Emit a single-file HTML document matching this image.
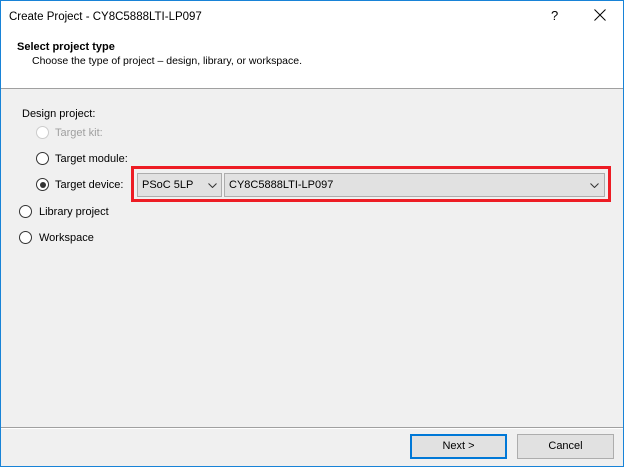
<!DOCTYPE html>
<html><head><meta charset="utf-8"><style>
*{margin:0;padding:0;box-sizing:border-box}
body{width:624px;height:467px;overflow:hidden;font-family:"Liberation Sans",sans-serif;font-size:11px;color:#000;position:relative;background:#f0f0f0}
.a{position:absolute;white-space:nowrap}
.win{position:absolute;left:0;top:0;width:624px;height:467px;border:1px solid #1883d7;background:#f0f0f0}
.head{position:absolute;left:1px;top:1px;width:622px;height:88px;background:#fff;border-bottom:1px solid #a0a0a0}
.r{position:absolute;width:13px;height:13px;border:1px solid #333;border-radius:50%;background:#fff}
.r.dis{border-color:#ccc}
.r.on::after{content:"";position:absolute;left:2.5px;top:2.5px;width:6px;height:6px;border-radius:50%;background:#333}
.cb{position:absolute;height:24px;border:1px solid #adadad;background:#e1e1e1;padding:5px 0 0 4px}
.btn{position:absolute;height:25px;border:1px solid #adadad;background:#e1e1e1;text-align:center;line-height:23px}
</style></head><body>
<div class="win"></div>
<div class="head"></div>
<div class="a" style="left:9px;top:11px;font-size:11.5px">Create Project - CY8C5888LTI-LP097</div>
<div class="a" style="left:551px;top:8px;font-size:13px">?</div>
<svg class="a" style="left:594px;top:9px" width="12" height="12"><path d="M0.5 0.5L11.5 11.5M11.5 0.5L0.5 11.5" stroke="#000" stroke-width="1"/></svg>
<div class="a" style="left:17px;top:41px;font-weight:bold;font-size:11px">Select project type</div>
<div class="a" style="left:32px;top:55px;font-size:10.5px">Choose the type of project – design, library, or workspace.</div>
<div class="a" style="left:22px;top:108px">Design project:</div>
<div class="r dis" style="left:36px;top:126px"></div><div class="a" style="left:55px;top:127px;color:#a0a0a0">Target kit:</div>
<div class="r" style="left:36px;top:152px"></div><div class="a" style="left:55px;top:153px">Target module:</div>
<div class="r on" style="left:36px;top:178px"></div><div class="a" style="left:55px;top:179px">Target device:</div>
<div class="r" style="left:19px;top:205px"></div><div class="a" style="left:39px;top:206px">Library project</div>
<div class="r" style="left:19px;top:231px"></div><div class="a" style="left:39px;top:232px">Workspace</div>
<div class="a" style="left:131px;top:166px;width:480px;height:36px;border:3px solid #ed1c24"></div>
<div class="cb" style="left:137px;top:173px;width:85px">PSoC 5LP</div>
<svg class="a" style="left:208px;top:183px" width="9" height="5"><path d="M0.5 0.5L4.5 4.5L8.5 0.5" fill="none" stroke="#333"/></svg>
<div class="cb" style="left:224px;top:173px;width:381px">CY8C5888LTI-LP097</div>
<svg class="a" style="left:590px;top:183px" width="9" height="5"><path d="M0.5 0.5L4.5 4.5L8.5 0.5" fill="none" stroke="#333"/></svg>
<div class="a" style="left:1px;top:427px;width:622px;height:1px;background:#a0a0a0"></div>
<div class="a" style="left:1px;top:428px;width:622px;height:1px;background:#fff"></div>
<div class="btn" style="left:410px;top:434px;width:97px;border:2px solid #0078d7;line-height:21px">Next &gt;</div>
<div class="btn" style="left:517px;top:434px;width:97px">Cancel</div>
</body></html>
